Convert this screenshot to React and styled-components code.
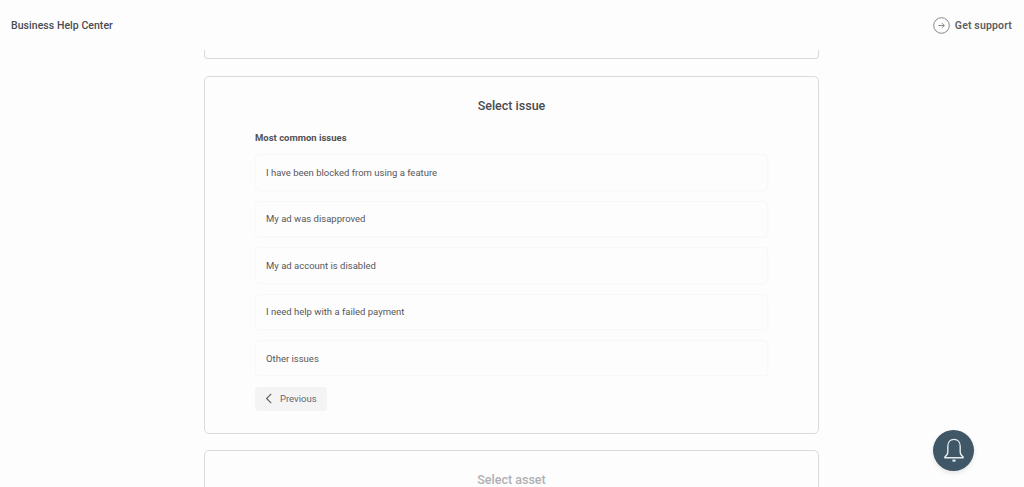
import styled, { createGlobalStyle } from 'styled-components';

const issues = [
  'I have been blocked from using a feature',
  'My ad was disapproved',
  'My ad account is disabled',
  'I need help with a failed payment',
  'Other issues',
];

const App = () => {
  return (
    <Page>
      <GlobalStyle />
      <Header>
        <Brand>Business Help Center</Brand>
        <Support>
          <svg width="17" height="17" viewBox="0 0 17 17" fill="none" stroke="#85878a" strokeWidth="1">
            <circle cx="8.5" cy="8.5" r="7.8" />
            <path d="M5.4 8.5h5.8M8.9 6.1l2.4 2.4-2.4 2.4" />
          </svg>
          <SupportText>Get support</SupportText>
        </Support>
      </Header>

      <Main>
        <ClippedCard />
        <Card>
          <CardTitle>Select issue</CardTitle>
          <Section>
            <SectionTitle>Most common issues</SectionTitle>
            <IssueList>
              {issues.map((issue) => (
                <IssueRow key={issue}>{issue}</IssueRow>
              ))}
            </IssueList>
            <PrevButton>
              <svg width="8" height="11" viewBox="0 0 8 11" fill="none" stroke="#5f6266" strokeWidth="1.2">
                <path d="M6.2 .8L1.6 5.5l4.6 4.7" />
              </svg>
              Previous
            </PrevButton>
          </Section>
        </Card>
        <NextCard>
          <CardTitle $muted>Select asset</CardTitle>
        </NextCard>
      </Main>

      <BellButton>
        <svg width="24" height="26" viewBox="0 0 24 26" fill="none" stroke="#e6ebee" strokeWidth="1.4" strokeLinejoin="round">
          <path d="M12 1.4c-3.900 0-6.200 3-6.200 7.100v5.600c0 2-1 3.600-3 5v.7h18.400v-.7c-2-1.400-3-3-3-5V8.500c0-4.100-2.300-7.100-6.200-7.100z" />
          <path d="M10.400 22.600h3.200" strokeWidth="2" />
        </svg>
      </BellButton>
    </Page>
  );
};

const GlobalStyle = createGlobalStyle`
  html, body {
    margin: 0;
    padding: 0;
    background: #fefdfe;
  }
  * {
    box-sizing: border-box;
  }
`;
const Page = styled.div`
  position: relative;
  width: 1024px;
  height: 487px;
  overflow: hidden;
  background: #fefdfe;
  font-family: Roboto, "Liberation Sans", sans-serif;
  color: #4a4c50;
`;
const Header = styled.div`
  display: flex;
  justify-content: space-between;
  align-items: center;
  height: 50px;
  padding: 0 12px 0 11px;
`;
const Brand = styled.div`
  font-size: 10.5px;
  font-weight: 500;
  letter-spacing: 0.05px;
  color: #484b50;
`;
const Support = styled.div`
  display: flex;
  align-items: center;
  gap: 5px;
`;
const SupportText = styled.span`
  font-size: 10.5px;
  font-weight: 600;
  letter-spacing: 0.15px;
  color: #5c5e62;
`;
const Main = styled.div`
  display: flex;
  flex-direction: column;
  width: 615px;
  margin-left: 204px;
`;
const ClippedCard = styled.div`
  height: 9px;
  margin-bottom: 17px;
  border: 1px solid #dadadd;
  border-top: none;
  border-radius: 0 0 4px 4px;
`;
const Card = styled.div`
  display: flex;
  flex-direction: column;
  height: 358px;
  padding: 21px 50px 0;
  border: 1px solid #dadadd;
  border-radius: 5px;
`;
const NextCard = styled(Card)`
  margin-top: 16px;
  height: 60px;
`;
const CardTitle = styled.div`
  text-align: center;
  font-size: 12.5px;
  line-height: 15px;
  font-weight: 500;
  color: ${(props) => (props.$muted ? '#aeb0b2' : '#494b4f')};
`;
const Section = styled.div`
  margin-top: 19px;
`;
const SectionTitle = styled.div`
  font-size: 9.5px;
  line-height: 12px;
  font-weight: 700;
  color: #505255;
`;
const IssueList = styled.div`
  display: flex;
  flex-direction: column;
  gap: 10px;
  margin-top: 10.4px;
`;
const IssueRow = styled.div`
  display: flex;
  align-items: center;
  height: 36.4px;
  width: 513px;
  padding-left: 10px;
  font-size: 9.5px;
  color: #55575a;
  border: 1px solid #f9f8f9;
  border-radius: 4px;
  box-shadow: 1px 1px 2px rgba(0, 0, 0, 0.012);
`;
const PrevButton = styled.div`
  display: flex;
  align-items: center;
  gap: 7px;
  width: 72px;
  height: 24px;
  margin-top: 10.6px;
  padding-left: 10px;
  font-size: 9.5px;
  color: #66686b;
  background: #f4f4f5;
  border-radius: 4px;
`;
const BellButton = styled.div`
  position: absolute;
  left: 933px;
  top: 430px;
  display: flex;
  align-items: center;
  justify-content: center;
  width: 41px;
  height: 41px;
  border-radius: 50%;
  background: #3f5767;
  box-shadow: 0 2px 5px rgba(0, 0, 0, 0.1);
`;

export default App;
